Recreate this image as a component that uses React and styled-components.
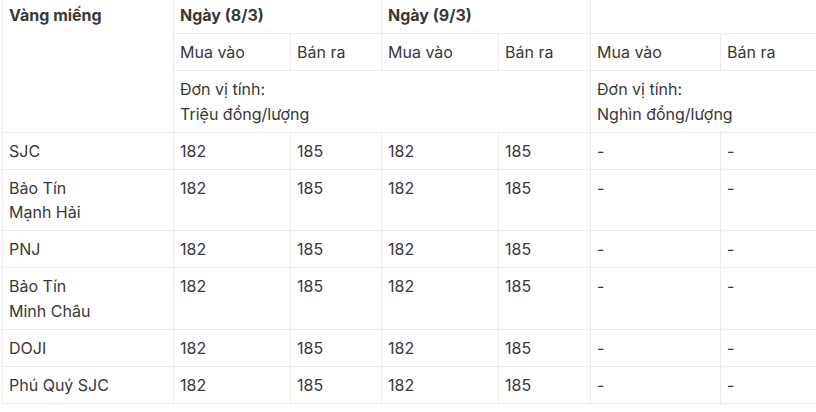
import React from "react";
import styled, { createGlobalStyle } from "styled-components";

const GlobalStyle = createGlobalStyle`
  html, body {
    margin: 0;
    padding: 0;
    background: #fff;
    overflow: hidden;
  }
`;

const rows = [
  { name: ["SJC"] },
  { name: ["Bảo Tín", "Mạnh Hải"] },
  { name: ["PNJ"] },
  { name: ["Bảo Tín", "Minh Châu"] },
  { name: ["DOJI"] },
  { name: ["Phú Quý SJC"] },
];

const colWidths = [171, 117, 91, 117, 92, 130, 130];

const App = () => {
  return (
    <>
      <GlobalStyle />
      <Wrapper>
        <Table>
          <colgroup>
            {colWidths.map((w, i) => (
              <col key={i} style={{ width: w }} />
            ))}
          </colgroup>
          <tbody>
            <tr>
              <HeadCell rowSpan={3}>Vàng miếng</HeadCell>
              <HeadCell colSpan={2}>Ngày (8/3)</HeadCell>
              <HeadCell colSpan={2}>Ngày (9/3)</HeadCell>
              <Cell colSpan={2}></Cell>
            </tr>
            <tr>
              <Cell>Mua vào</Cell>
              <Cell>Bán ra</Cell>
              <Cell>Mua vào</Cell>
              <Cell>Bán ra</Cell>
              <Cell>Mua vào</Cell>
              <Cell>Bán ra</Cell>
            </tr>
            <tr>
              <Cell colSpan={4}>
                Đơn vị tính:
                <br />
                Triệu đồng/lượng
              </Cell>
              <Cell colSpan={2}>
                Đơn vị tính:
                <br />
                Nghìn đồng/lượng
              </Cell>
            </tr>
            {rows.map((row, i) => (
              <tr key={i}>
                <Cell>
                  {row.name.map((line, j) => (
                    <React.Fragment key={j}>
                      {j > 0 && <br />}
                      {line}
                    </React.Fragment>
                  ))}
                </Cell>
                <Cell>182</Cell>
                <Cell>185</Cell>
                <Cell>182</Cell>
                <Cell>185</Cell>
                <Cell>-</Cell>
                <Cell>-</Cell>
              </tr>
            ))}
          </tbody>
        </Table>
      </Wrapper>
    </>
  );
};

export default App;

const Wrapper = styled.div`
  width: 816px;
  height: 412px;
  overflow: hidden;
  padding-left: 2px;
  box-sizing: border-box;
`;

const Table = styled.table`
  margin-top: -4px;
  border-collapse: collapse;
  table-layout: fixed;
  width: 848px;
  font-family: Inter, "Noto Sans", sans-serif;
  font-size: 16px;
  color: #383838;
`;

const Cell = styled.td`
  border: 1px solid #ebebeb;
  padding: 6px 6px;
  line-height: 24.17px;
  vertical-align: top;
  text-align: left;
  font-weight: 400;
  white-space: nowrap;
`;

const HeadCell = styled(Cell)`
  font-weight: 700;
`;
